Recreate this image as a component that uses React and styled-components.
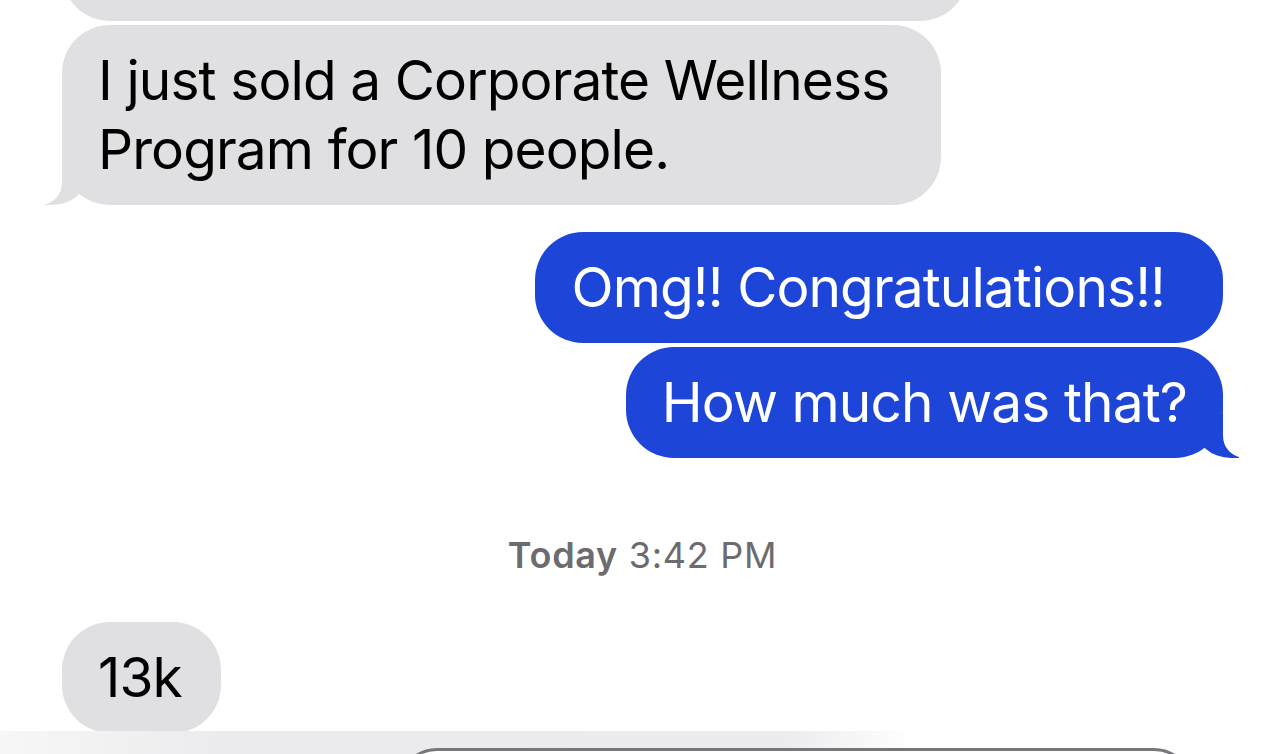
import React from "react";
import { createGlobalStyle, css, styled } from "styled-components";

const GlobalStyle = createGlobalStyle`
  html, body {
    margin: 0;
    padding: 0;
    background: #fff;
  }
  body {
    font-family: Inter, "Noto Sans", "Liberation Sans", sans-serif;
    -webkit-font-smoothing: antialiased;
  }
`;

const Screen = styled.div`
  height: 100vh;
  display: flex;
  flex-direction: column;
  overflow: hidden;
  background: #fff;
`;

const Thread = styled.div`
  flex: 1;
  min-height: 0;
  overflow: hidden;
  display: flex;
  flex-direction: column;
  padding: 0 47px 0 62px;
`;

const Bubble = styled.div`
  position: relative;
  max-width: 900px;
  box-sizing: border-box;
  padding: 21px ${({ $padRight }) => $padRight ?? 36}px 21px 36px;
  border-radius: 48px;
  font-size: 55px;
  line-height: 69px;
  letter-spacing: -0.9px;
  margin-top: ${({ $gap }) => $gap ?? 4}px;
  flex-shrink: 0;

  ${({ $mine }) =>
    $mine
      ? css`
          align-self: flex-end;
          background: #1d46d8;
          color: #fff;
        `
      : css`
          align-self: flex-start;
          background: #e0e0e3;
          color: #000;
        `}

  ${({ $height }) =>
    $height &&
    css`
      height: ${$height}px;
      width: 906px;
      max-width: none;
    `}

  ${({ $tail, $mine }) =>
    $tail &&
    css`
      &::before,
      &::after {
        content: "";
        position: absolute;
        bottom: 0;
        height: 44px;
      }
      &::before {
        width: 44px;
        background: ${$mine ? "#1d46d8" : "#e0e0e3"};
        ${$mine ? "right: -16px;" : "left: -18px;"}
        ${$mine
          ? "border-bottom-left-radius: 36px 32px;"
          : "border-bottom-right-radius: 36px 32px;"}
      }
      &::after {
        width: 57px;
        background: #fff;
        ${$mine ? "right: -57px;" : "left: -57px;"}
        ${$mine
          ? "border-bottom-left-radius: 22px;"
          : "border-bottom-right-radius: 22px;"}
      }
    `}
`;

const Stamp = styled.div`
  align-self: center;
  margin-top: 77px;
  font-size: 36px;
  line-height: 41px;
  color: #6c6c70;
  letter-spacing: 0.7px;

  b {
    font-weight: 600;
  }
`;

const ComposeBar = styled.div`
  height: 23px;
  flex-shrink: 0;
  padding-top: 17px;
  box-sizing: border-box;
  overflow: hidden;
  background: linear-gradient(
    to right,
    #f7f7f8 0%,
    #ebebed 18%,
    #ececee 62%,
    #ffffff 72%
  );
`;

const InputField = styled.div`
  margin-left: 397px;
  width: 797px;
  height: 80px;
  box-sizing: border-box;
  border: 3px solid #76767b;
  border-radius: 44px;
  background: #fff;
`;

const App = () => {
  return (
    <>
      <GlobalStyle />
      <Screen>
        <Thread>
          <Bubble $height={180} $gap={-159} aria-hidden="true" />
          <Bubble $tail $padRight={52}>
            I just sold a Corporate Wellness
            <br />
            Program for 10 people.
          </Bubble>
          <Bubble $mine $gap={27} $padRight={58}>
            Omg!! Congratulations!!
          </Bubble>
          <Bubble $mine $tail>
            How much was that?
          </Bubble>
          <Stamp>
            <b>Today</b> 3:42 PM
          </Stamp>
          <Bubble $gap={46} $padRight={39}>
            13k
          </Bubble>
        </Thread>
        <ComposeBar>
          <InputField />
        </ComposeBar>
      </Screen>
    </>
  );
};

export default App;
